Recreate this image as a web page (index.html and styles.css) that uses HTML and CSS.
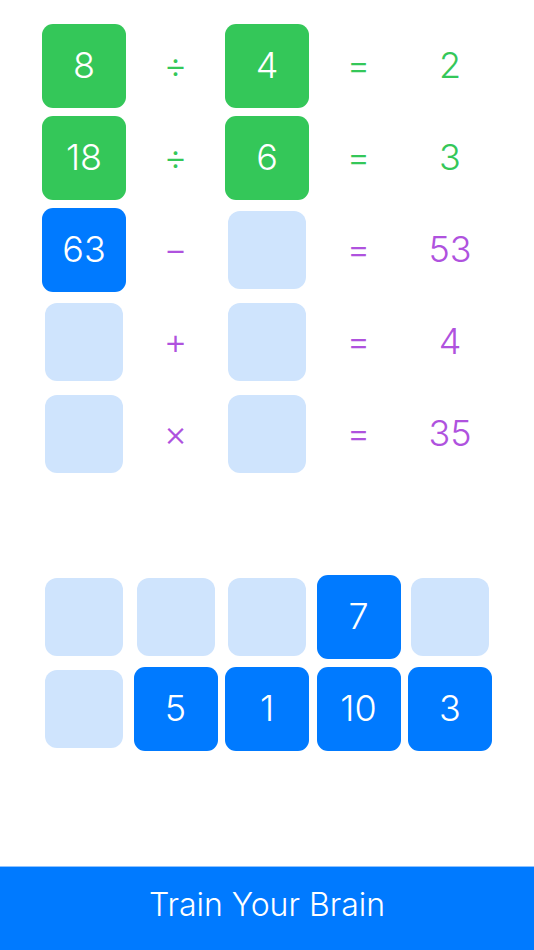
FILE: index.html
```html
<!DOCTYPE html>
<html lang="en">
<head>
  <meta charset="UTF-8" />
  <meta name="viewport" content="width=device-width, initial-scale=1.0"/>
  <title>Train Your Brain</title>
  <link rel="stylesheet" href="styles.css">
</head>
<body>
  <div class="app">
    <!-- equations -->
    <div class="board">
      <div class="tile green">8</div>
      <div class="op green-text">÷</div>
      <div class="tile green">4</div>
      <div class="op green-text">=</div>
      <div class="op green-text">2</div>

      <div class="tile green">18</div>
      <div class="op green-text">÷</div>
      <div class="tile green">6</div>
      <div class="op green-text">=</div>
      <div class="op green-text">3</div>

      <div class="tile blue">63</div>
      <div class="op purple-text">−</div>
      <div class="slot"></div>
      <div class="op purple-text">=</div>
      <div class="op purple-text">53</div>

      <div class="slot"></div>
      <div class="op purple-text">+</div>
      <div class="slot"></div>
      <div class="op purple-text">=</div>
      <div class="op purple-text">4</div>

      <div class="slot"></div>
      <div class="op purple-text">×</div>
      <div class="slot"></div>
      <div class="op purple-text">=</div>
      <div class="op purple-text">35</div>
    </div>

    <!-- number tray -->
    <div class="board tray">
      <div class="slot"></div>
      <div class="slot"></div>
      <div class="slot"></div>
      <div class="tile blue">7</div>
      <div class="slot"></div>

      <div class="slot"></div>
      <div class="tile blue">5</div>
      <div class="tile blue">1</div>
      <div class="tile blue">10</div>
      <div class="tile blue">3</div>
    </div>

    <button class="train">Train Your Brain</button>
  </div>
</body>
</html>
```

FILE: styles.css
```css
body {
  margin: 0;
  background: #fff;
  font-family: Inter, "Noto Sans", sans-serif;
}
.app {
  height: 950px;
  display: flex;
  flex-direction: column;
  align-items: center;
}
.board {
  display: grid;
  grid-template-columns: repeat(5, 84px);
  grid-auto-rows: 84px;
  gap: 8px 7.5px;
  margin-top: 24px;
}
.tray {
  margin-top: 99px;
}
.tile {
  border-radius: 11px;
  color: #fff;
  font-size: 36px;
  font-weight: 300;
  display: flex;
  align-items: center;
  justify-content: center;
  padding-bottom: 2px;
}
.slot {
  margin: 3px;
  border-radius: 12px;
  background: #cfe4fd;
}
.green { background: #34c759; }
.blue { background: #007aff; }
.op {
  font-size: 36px;
  font-weight: 300;
  display: flex;
  align-items: center;
  justify-content: center;
  padding-bottom: 2px;
}
.green-text { color: #34c759; }
.purple-text { color: #af52de; }
.train {
  margin-top: auto;
  width: 100%;
  height: 84px;
  padding: 0 0 8px;
  border: none;
  border-top: 1px solid #8fc3ff;
  background: #007aff;
  color: #fff;
  font-family: inherit;
  font-size: 32px;
  font-weight: 300;
  cursor: pointer;
}
```
